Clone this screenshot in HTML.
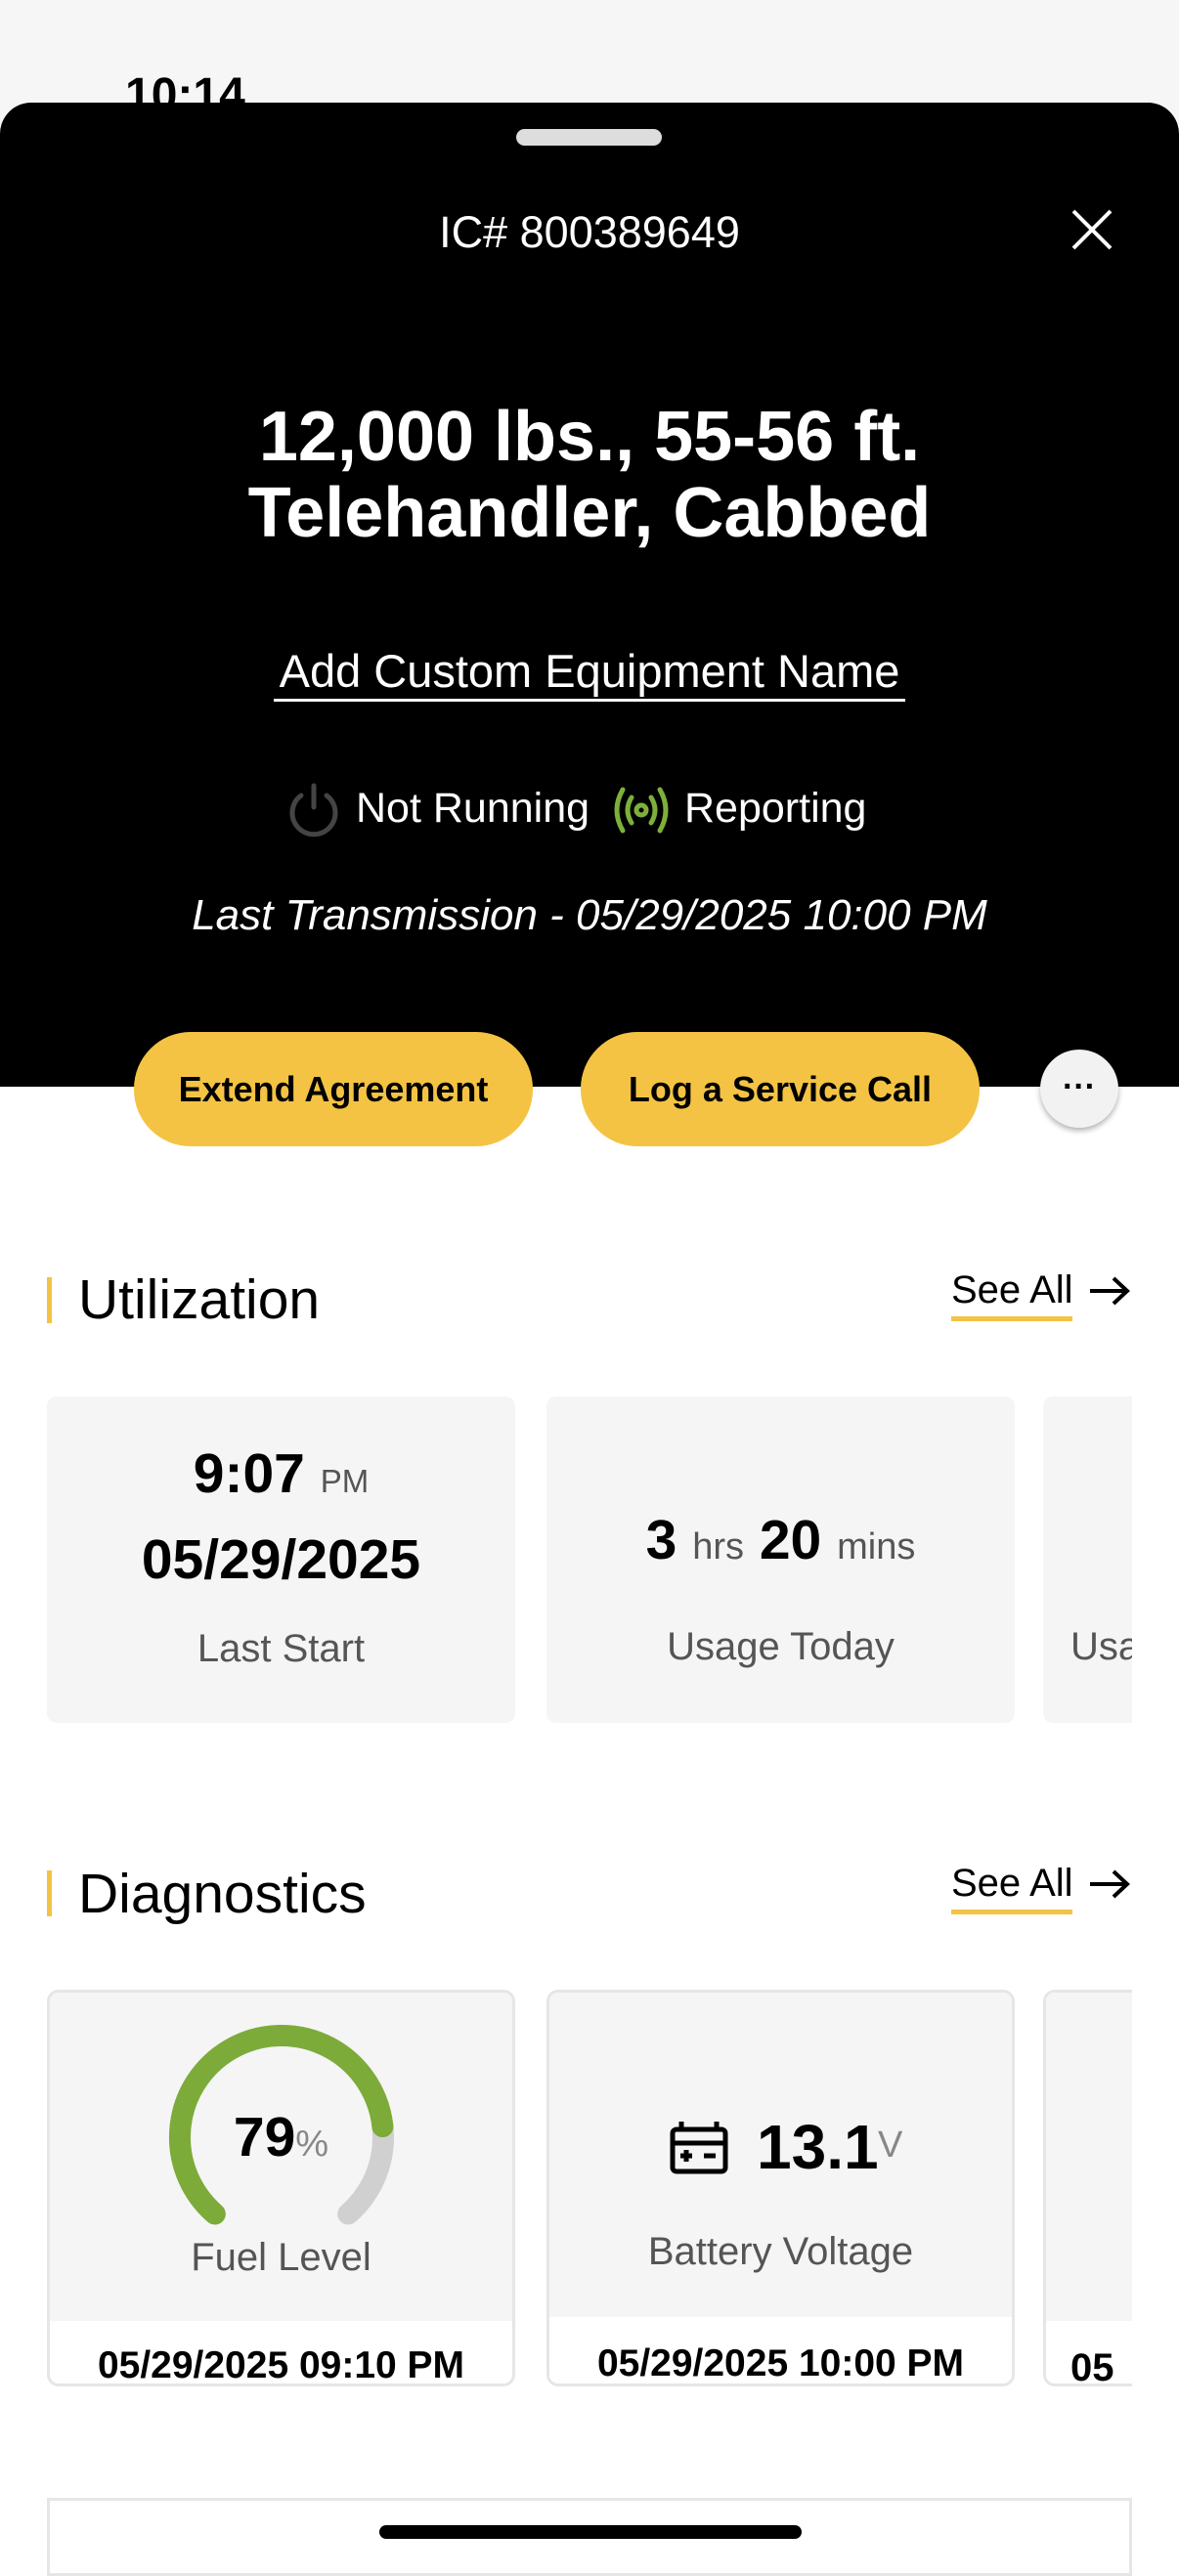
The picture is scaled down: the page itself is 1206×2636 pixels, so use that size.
<!DOCTYPE html>
<html><head><meta charset="utf-8"><style>
*{margin:0;padding:0;box-sizing:border-box}
body{width:1206px;height:2622px;position:relative;background:#fff;font-family:"Liberation Sans",sans-serif;overflow:hidden;color:#000}
.a{position:absolute}
.c{text-align:center}
.btn{position:absolute;top:1054px;height:117px;width:408px;border-radius:58px;background:#f4c344;font-weight:bold;font-size:36px;display:flex;align-items:center;justify-content:center}
.card{position:absolute;background:#f5f5f5;border-radius:10px}
.sec{position:absolute;left:80px;font-size:57px}
.bar{position:absolute;left:48px;width:5px;background:#f4c344}
.see{position:absolute;left:973px;font-size:40px}
.ul{position:absolute;left:973px;width:124px;height:5px;background:#f4c344}
.gray{color:#555}
</style></head><body>
<div class="a" style="left:0;top:0;width:1206px;height:140px;background:#f6f6f6"></div>
<div class="a" style="left:128px;top:70px;font-size:48px;font-weight:bold">10:14</div>
<div class="a" style="left:0;top:105px;width:1206px;height:1007px;background:#000;border-radius:32px 32px 0 0"></div>
<div class="a" style="left:528px;top:132px;width:149px;height:17px;border-radius:9px;background:#ddd"></div>
<div class="a c" style="left:0;top:212px;width:1206px;font-size:45px;color:#fff">IC# 800389649</div>
<svg class="a" style="left:1094px;top:212px" width="46" height="46"><path d="M4 4L42 42M42 4L4 42" stroke="#fff" stroke-width="4"/></svg>
<div class="a c" style="left:0;top:408px;width:1206px;font-size:72px;font-weight:bold;color:#fff;line-height:78px">12,000 lbs., 55-56 ft.<br>Telehandler, Cabbed</div>
<div class="a" style="left:280px;top:659px;width:646px;font-size:47px;color:#fff;border-bottom:3px solid #fff;line-height:56px;text-align:center;white-space:nowrap">Add Custom Equipment Name</div>
<svg class="a" style="left:293px;top:800px" width="56" height="58"><path d="M15 14A22 22 0 1 0 41 14" fill="none" stroke="#444" stroke-width="5" stroke-linecap="round"/><path d="M28 4V26" stroke="#444" stroke-width="5" stroke-linecap="round"/></svg>
<div class="a" style="left:364px;top:803px;font-size:43px;color:#fff">Not Running</div>
<svg class="a" style="left:625px;top:804px" width="62" height="50"><g fill="none" stroke="#7db03a" stroke-width="5" stroke-linecap="round"><path d="M12 4Q0 25 12 46M50 4Q62 25 50 46M21 12Q13 25 21 38M41 12Q49 25 41 38"/><circle cx="31" cy="25" r="5"/></g></svg>
<div class="a" style="left:700px;top:803px;font-size:43px;color:#fff">Reporting</div>
<div class="a c" style="left:0;top:912px;width:1206px;font-size:44px;font-style:italic;color:#fff">Last Transmission - 05/29/2025 10:00 PM</div>
<div class="btn" style="left:137px;top:1056px">Extend Agreement</div>
<div class="btn" style="left:594px;top:1056px">Log a Service Call</div>
<div class="a" style="left:1064px;top:1074px;width:80px;height:80px;border-radius:50%;background:#f2f2f2;box-shadow:0 3px 6px rgba(0,0,0,.3);text-align:center;font-size:34px;font-weight:bold;line-height:76px">···</div>

<div class="bar" style="top:1307px;height:47px"></div>
<div class="sec" style="top:1297px">Utilization</div>
<div class="see" style="top:1298px">See All</div>
<div class="ul" style="top:1347px"></div>
<svg class="a" style="left:1112px;top:1304px" width="46" height="34"><path d="M3 17H41M27 4L41 17L27 30" fill="none" stroke="#000" stroke-width="4"/></svg>

<div class="card" style="left:48px;top:1429px;width:479px;height:334px"></div>
<div class="a c" style="left:48px;top:1475px;width:479px;font-size:57px;font-weight:bold">9:07 <span style="font-size:33px;font-weight:normal" class="gray">PM</span></div>
<div class="a c" style="left:48px;top:1563px;width:479px;font-size:57px;font-weight:bold">05/29/2025</div>
<div class="a c gray" style="left:48px;top:1665px;width:479px;font-size:40px">Last Start</div>
<div class="card" style="left:559px;top:1429px;width:479px;height:334px"></div>
<div class="a c" style="left:559px;top:1543px;width:479px;font-size:57px;font-weight:bold">3 <span style="font-size:38px;font-weight:normal" class="gray">hrs</span> 20 <span style="font-size:38px;font-weight:normal" class="gray">mins</span></div>
<div class="a c gray" style="left:559px;top:1663px;width:479px;font-size:40px">Usage Today</div>
<div class="card" style="left:1067px;top:1429px;width:91px;height:334px;border-radius:10px 0 0 10px;overflow:hidden"><div class="gray" style="position:absolute;left:28px;top:234px;font-size:40px;white-space:nowrap">Usage</div></div>

<div class="bar" style="top:1914px;height:47px"></div>
<div class="sec" style="top:1905px">Diagnostics</div>
<div class="see" style="top:1905px">See All</div>
<div class="ul" style="top:1954px"></div>
<svg class="a" style="left:1112px;top:1911px" width="46" height="34"><path d="M3 17H41M27 4L41 17L27 30" fill="none" stroke="#000" stroke-width="4"/></svg>

<div class="a" style="left:48px;top:2036px;width:479px;height:406px;border:3px solid #e6e6e6;border-radius:12px;background:#fff;overflow:hidden"><div style="height:336px;background:#f5f5f5"></div></div>
<div class="a" style="left:559px;top:2036px;width:479px;height:406px;border:3px solid #e6e6e6;border-radius:12px;background:#fff;overflow:hidden"><div style="height:332px;background:#f5f5f5"></div></div>
<div class="a" style="left:1067px;top:2036px;width:91px;height:406px;border:3px solid #e6e6e6;border-right:none;border-radius:12px 0 0 12px;background:#fff;overflow:hidden"><div style="height:336px;background:#f5f5f5"></div><div style="position:absolute;left:25px;top:362px;font-size:40px;font-weight:bold">05</div></div>
<svg class="a" style="left:0;top:12px;pointer-events:none" width="1206" height="2610">
<path d="M219.8 2253.5A104 104 0 1 1 356.2 2253.5" fill="none" stroke="#d0d0d0" stroke-width="22" stroke-linecap="round"/>
<path d="M219.8 2253.5A104 104 0 1 1 391.4 2164.1" fill="none" stroke="#7dab39" stroke-width="22" stroke-linecap="round"/>
</svg>
<div class="a c" style="left:48px;top:2154px;width:479px;font-size:57px;font-weight:bold">79<span style="font-size:38px;font-weight:normal;color:#888">%</span></div>
<div class="a c gray" style="left:48px;top:2288px;width:479px;font-size:40px">Fuel Level</div>
<svg class="a" style="left:684px;top:2167px" width="62" height="58"><g fill="none" stroke="#000" stroke-width="5"><rect x="4" y="12" width="54" height="43" rx="4"/><path d="M13 12V4M49 12V4M4 26H58"/><path d="M12 39H24M18 33V45M36 39H48"/></g></svg>
<div class="a" style="left:774px;top:2160px;font-size:64px;font-weight:bold">13.1</div>
<div class="a" style="left:898px;top:2174px;font-size:38px;color:#888">V</div>
<div class="a c gray" style="left:559px;top:2282px;width:479px;font-size:40px">Battery Voltage</div>
<div class="a c" style="left:48px;top:2399px;width:479px;font-size:39px;font-weight:bold">05/29/2025 09:10 PM</div>
<div class="a c" style="left:559px;top:2397px;width:479px;font-size:39px;font-weight:bold">05/29/2025 10:00 PM</div>

<div class="a" style="left:48px;top:2556px;width:1110px;height:80px;border:3px solid #e6e6e6;background:#fff"></div>
<div class="a" style="left:388px;top:2584px;width:432px;height:14px;border-radius:7px;background:#000"></div>
</body></html>
